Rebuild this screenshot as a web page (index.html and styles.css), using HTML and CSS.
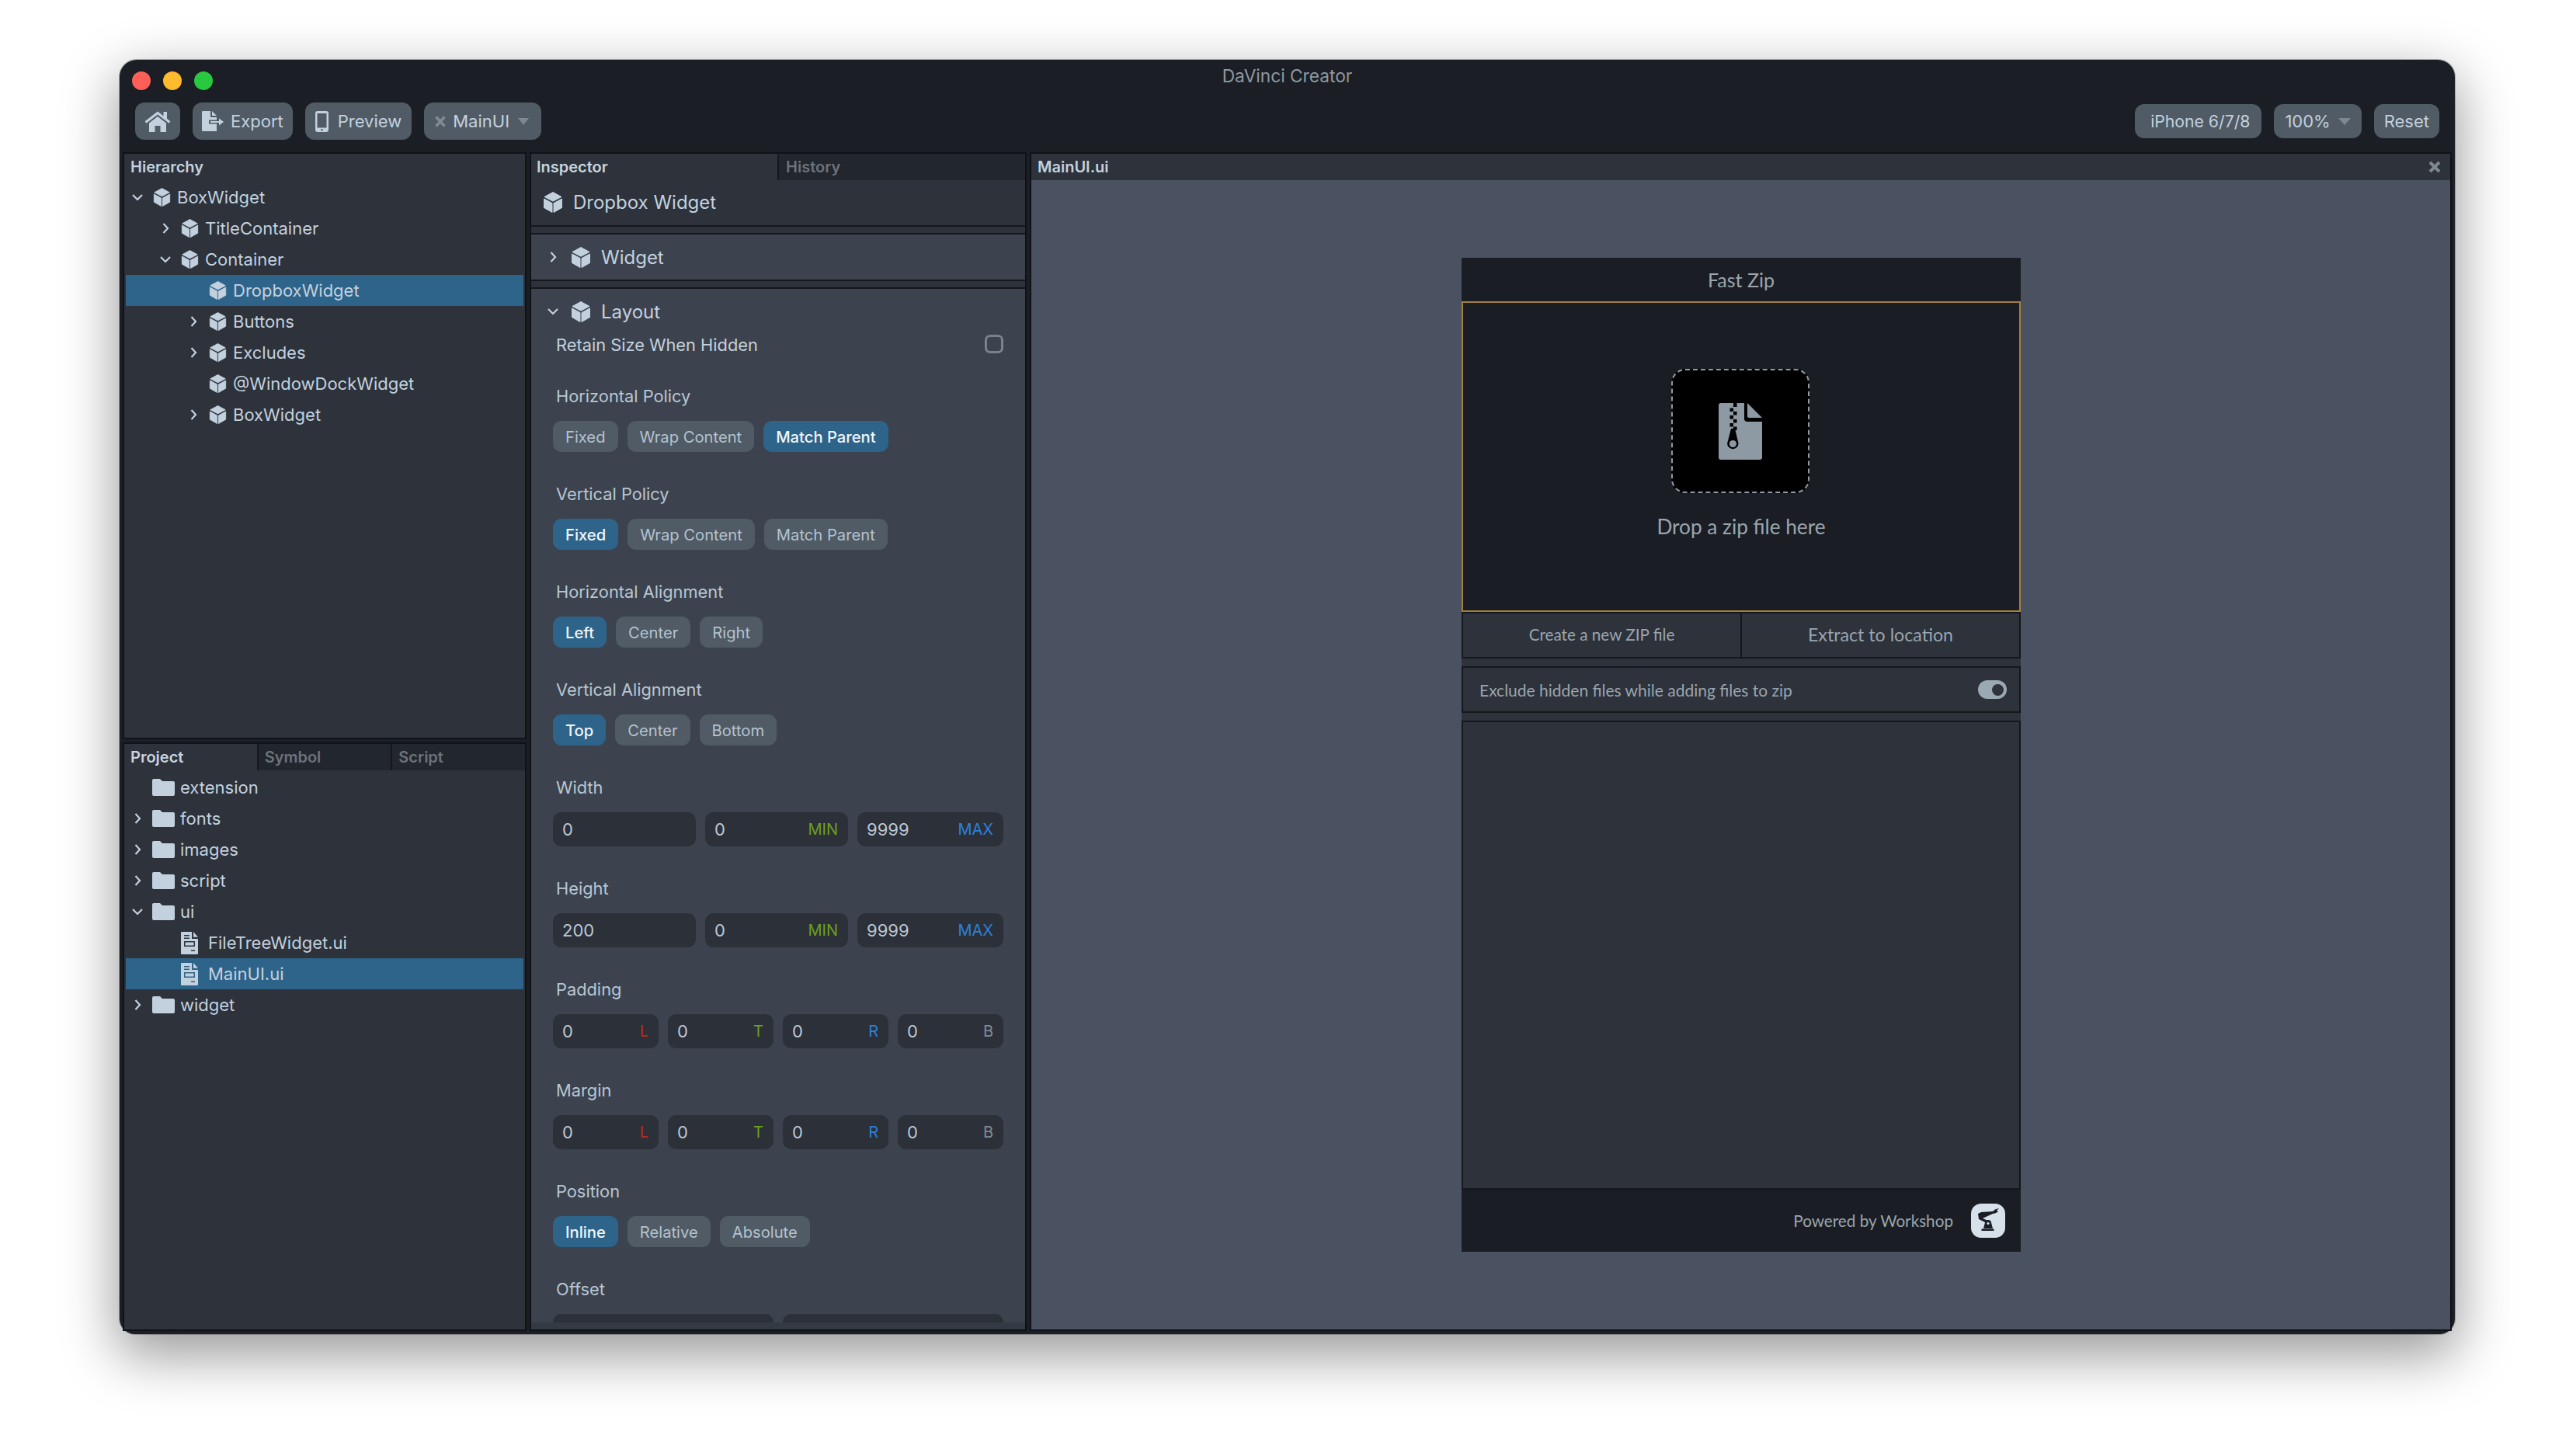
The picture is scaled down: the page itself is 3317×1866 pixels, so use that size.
FILE: index.html
```html
<!DOCTYPE html>
<html lang="en">
  <head>
    <meta charset="utf-8" />
    <title>DaVinci Creator</title>
    <link rel="stylesheet" href="styles.css">
  </head>
  <body>
    <svg class="defs" width="0" height="0">
      <symbol id="cube" viewBox="0 0 26 29">
        <path d="M13 1.5L24 7.5L13 13.2L2 7.5Z M1.5 10L12 15.6V27.5L1.5 21.5Z M24.5 10L14 15.6V27.5L24.5 21.5Z" fill="currentColor" stroke="currentColor" stroke-linejoin="round" />
      </symbol>
      <symbol id="right" viewBox="0 0 14 14">
        <path d="M4.5 1L10 7L4.5 13" fill="none" stroke="currentColor" stroke-width="2.2" />
      </symbol>
      <symbol id="down" viewBox="0 0 14 14">
        <path d="M1 4L7 10L13 4" fill="none" stroke="currentColor" stroke-width="2.2" />
      </symbol>
      <symbol id="folder" viewBox="0 0 29 22">
        <path d="M2 0H10L13 3H27a2 2 0 0 1 2 2V20a2 2 0 0 1-2 2H2a2 2 0 0 1-2-2V2a2 2 0 0 1 2-2Z" fill="currentColor" />
      </symbol>
      <symbol id="uifile" viewBox="0 0 22 29">
        <path fill="currentColor" fill-rule="evenodd" d="M1 0H14V9H22V28a1 1 0 0 1-1 1H1a1 1 0 0 1-1-1V1a1 1 0 0 1 1-1Z M4 4h7v1.5H4Z M4 7.5h7V9H4Z M4 12h14v7H4Z M5.5 13.5v4h11v-4Z M13 23.5h5V25h-5Z" />
        <path fill="currentColor" d="M16 0L22 6.8H16Z" />
      </symbol>
    </svg>

    <div class="window">
      <div class="titlebar">
        <div class="lights">
          <span class="light light-close"></span>
          <span class="light light-min"></span>
          <span class="light light-max"></span>
        </div>
        <div class="app-title">DaVinci Creator</div>
      </div>

      <div class="toolbar">
        <button class="tool home">
          <svg width="34" height="27" viewBox="0 0 34 27">
            <path d="M1.5 14.5L17 2.5L32.5 14.5" fill="none" stroke="currentColor" stroke-width="3" />
            <path d="M24.5 1H29V10H24.5Z M6 15.5L17 7L28 15.5V27H20.5V19H13.5V27H6Z" fill="currentColor" />
          </svg>
        </button>
        <button class="tool export">
          <svg width="28" height="26" viewBox="0 0 28 26">
            <path d="M1 0H11V8H19V11.5H9V16.5H19V26H1a1 1 0 0 1-1-1V1a1 1 0 0 1 1-1Z M13 0L19 6H13Z M11 13H22V9.5L28 14L22 18.5V15H11Z" fill="currentColor" />
          </svg>
          Export
        </button>
        <button class="tool preview">
          <svg width="17" height="27" viewBox="0 0 17 27">
            <path fill="currentColor" fill-rule="evenodd" d="M3 0H14a3 3 0 0 1 3 3V24a3 3 0 0 1-3 3H3a3 3 0 0 1-3-3V3a3 3 0 0 1 3-3Z M2.5 3V21.5H14.5V3Z M7.2 24.2a1.3 1.3 0 1 0 2.6 0a1.3 1.3 0 1 0-2.6 0Z" />
          </svg>
          Preview
        </button>
        <button class="tool doc-tool">
          <svg width="14" height="15" viewBox="0 0 14 15">
            <path d="M1.5 1.5L12.5 13.5M12.5 1.5L1.5 13.5" stroke="#7e8a94" stroke-width="3.6" />
          </svg>
          MainUI
          <span class="caret"></span>
        </button>

        <div class="tool-right">
          <button class="tool small device">iPhone 6/7/8</button>
          <button class="tool small zoom-tool">100% <span class="caret"></span></button>
          <button class="tool small reset">Reset</button>
        </div>
      </div>

      <div class="workspace">
        <div class="left-col">
          <div class="panel hierarchy">
            <div class="panel-head">Hierarchy</div>
            <div class="row"><svg class="chev"><use href="#down" /></svg><svg class="cube"><use href="#cube" /></svg>BoxWidget</div>
            <div class="row d1"><svg class="chev"><use href="#right" /></svg><svg class="cube"><use href="#cube" /></svg>TitleContainer</div>
            <div class="row d1"><svg class="chev"><use href="#down" /></svg><svg class="cube"><use href="#cube" /></svg>Container</div>
            <div class="row d2 selected"><span class="chev"></span><svg class="cube"><use href="#cube" /></svg>DropboxWidget</div>
            <div class="row d2"><svg class="chev"><use href="#right" /></svg><svg class="cube"><use href="#cube" /></svg>Buttons</div>
            <div class="row d2"><svg class="chev"><use href="#right" /></svg><svg class="cube"><use href="#cube" /></svg>Excludes</div>
            <div class="row d2"><span class="chev"></span><svg class="cube"><use href="#cube" /></svg>@WindowDockWidget</div>
            <div class="row d2"><svg class="chev"><use href="#right" /></svg><svg class="cube"><use href="#cube" /></svg>BoxWidget</div>
          </div>

          <div class="panel project">
            <div class="tabs">
              <div class="tab active">Project</div>
              <div class="tab">Symbol</div>
              <div class="tab">Script</div>
            </div>
            <div class="tree">
              <div class="row"><span class="chev"></span><svg class="folder"><use href="#folder" /></svg>extension</div>
              <div class="row"><svg class="chev"><use href="#right" /></svg><svg class="folder"><use href="#folder" /></svg>fonts</div>
              <div class="row"><svg class="chev"><use href="#right" /></svg><svg class="folder"><use href="#folder" /></svg>images</div>
              <div class="row"><svg class="chev"><use href="#right" /></svg><svg class="folder"><use href="#folder" /></svg>script</div>
              <div class="row"><svg class="chev"><use href="#down" /></svg><svg class="folder"><use href="#folder" /></svg>ui</div>
              <div class="row file"><span class="chev"></span><svg class="uifile"><use href="#uifile" /></svg>FileTreeWidget.ui</div>
              <div class="row file selected"><span class="chev"></span><svg class="uifile"><use href="#uifile" /></svg>MainUI.ui</div>
              <div class="row"><svg class="chev"><use href="#right" /></svg><svg class="folder"><use href="#folder" /></svg>widget</div>
            </div>
          </div>
        </div>

        <div class="panel inspector">
          <div class="tabs">
            <div class="tab active">Inspector</div>
            <div class="tab">History</div>
          </div>
          <div class="widget-title"><svg class="cube-big"><use href="#cube" /></svg>Dropbox Widget</div>
          <div class="section section-closed">
            <svg class="chev"><use href="#right" /></svg><svg class="cube-big"><use href="#cube" /></svg>Widget
          </div>
          <div class="section section-open">
            <div class="section-head">
              <svg class="chev"><use href="#down" /></svg><svg class="cube-big"><use href="#cube" /></svg>Layout
            </div>
            <div class="retain">
              <span>Retain Size When Hidden</span>
              <span class="checkbox"></span>
            </div>

            <div class="field">
              <div class="label">Horizontal Policy</div>
              <div class="btns"><span class="btn">Fixed</span><span class="btn">Wrap Content</span><span class="btn on">Match Parent</span></div>
            </div>
            <div class="field">
              <div class="label">Vertical Policy</div>
              <div class="btns"><span class="btn on">Fixed</span><span class="btn">Wrap Content</span><span class="btn">Match Parent</span></div>
            </div>
            <div class="field">
              <div class="label">Horizontal Alignment</div>
              <div class="btns"><span class="btn on">Left</span><span class="btn">Center</span><span class="btn">Right</span></div>
            </div>
            <div class="field">
              <div class="label">Vertical Alignment</div>
              <div class="btns"><span class="btn on">Top</span><span class="btn">Center</span><span class="btn">Bottom</span></div>
            </div>
            <div class="field">
              <div class="label">Width</div>
              <div class="inputs three">
                <div class="input">0</div>
                <div class="input">0<b class="tag-green">MIN</b></div>
                <div class="input">9999<b class="tag-blue">MAX</b></div>
              </div>
            </div>
            <div class="field">
              <div class="label">Height</div>
              <div class="inputs three">
                <div class="input">200</div>
                <div class="input">0<b class="tag-green">MIN</b></div>
                <div class="input">9999<b class="tag-blue">MAX</b></div>
              </div>
            </div>
            <div class="field">
              <div class="label">Padding</div>
              <div class="inputs four">
                <div class="input">0<b class="tag-red">L</b></div>
                <div class="input">0<b class="tag-green">T</b></div>
                <div class="input">0<b class="tag-blue">R</b></div>
                <div class="input">0<b class="tag-grey">B</b></div>
              </div>
            </div>
            <div class="field">
              <div class="label">Margin</div>
              <div class="inputs four">
                <div class="input">0<b class="tag-red">L</b></div>
                <div class="input">0<b class="tag-green">T</b></div>
                <div class="input">0<b class="tag-blue">R</b></div>
                <div class="input">0<b class="tag-grey">B</b></div>
              </div>
            </div>
            <div class="field">
              <div class="label">Position</div>
              <div class="btns"><span class="btn on">Inline</span><span class="btn">Relative</span><span class="btn">Absolute</span></div>
            </div>
            <div class="field">
              <div class="label">Offset</div>
              <div class="inputs two">
                <div class="input"></div>
                <div class="input"></div>
              </div>
            </div>
          </div>
          <div class="inspector-foot"></div>
        </div>

        <div class="panel canvas">
          <div class="canvas-tab">
            <span>MainUI.ui</span>
            <svg width="16" height="16" viewBox="0 0 16 16">
              <path d="M2 2L14 14M14 2L2 14" stroke="#7f8790" stroke-width="4" />
            </svg>
          </div>
          <div class="stage">
            <div class="zipapp">
              <div class="zip-title">Fast Zip</div>
              <div class="dropzone">
                <div class="dropbox">
                  <svg width="56" height="73" viewBox="0 0 56 73">
                    <path d="M3 0H33V20a4 4 0 0 0 4 4H56V70a3 3 0 0 1-3 3H3a3 3 0 0 1-3-3V3a3 3 0 0 1 3-3Z M37 0L56 19H39a2 2 0 0 1-2-2Z" fill="#8d99a3" />
                    <path d="M19 0h4.5v5H19Z M14.5 6.5h4.5v4.5H14.5Z M19 11h4.5v4.5H19Z M14.5 16h4.5v4.5H14.5Z M19 21h4.5v4.5H19Z M14.5 26h4.5v4.5H14.5Z M19 30.5h4.5v4.5H19Z M16 33H21L25.5 52a7.2 7.2 0 1 1-14.4 0Z" fill="#000" />
                    <circle cx="18.4" cy="52.5" r="4.6" fill="#8d99a3" />
                  </svg>
                </div>
                <div class="drop-text">Drop a zip file here</div>
              </div>
              <div class="zip-actions">
                <div class="zip-action create">Create a new ZIP file</div>
                <div class="zip-action">Extract to location</div>
              </div>
              <div class="zip-option">
                <span>Exclude hidden files while adding files to zip</span>
                <span class="toggle"><span class="knob"></span></span>
              </div>
              <div class="zip-log"></div>
              <div class="zip-foot">
                <span>Powered by Workshop</span>
                <span class="workshop">
                  <svg width="44" height="44" viewBox="0 0 44 44">
                    <path d="M13.5 32.5H29.5V35H13.5Z M16 32L18.5 22.5A5 5 0 0 1 25.5 22.5L28 32Z M9 13L13 11L28 10L31 7.5L36 6L33 9L35 10.5L31 12.5L28 13L15 19L22 22L20 25L10 20Z" fill="#1a1e24" />
                    <circle cx="22" cy="25.5" r="1.6" fill="#d7e1ea" />
                  </svg>
                </span>
              </div>
            </div>
          </div>
        </div>
      </div>
    </div>
  </body>
</html>
```

FILE: styles.css
```css
html,
body {
  margin: 0;
  padding: 0;
  height: 100%;
}

body {
  background-color: #fff;
  color: #c3d1df;
  font-family: "Inter", "Liberation Sans", sans-serif;
  font-size: 22px;
  overflow: hidden;
}

.defs {
  display: block;
  height: 0;
}

.window {
  box-sizing: border-box;
  display: flex;
  flex-direction: column;
  width: 3007px;
  height: 1641px;
  margin: 77px 0 0 154px;
  background-color: #1b1f25;
  border-radius: 22px 22px 20px 20px;
  box-shadow: 0 0 0 1px rgba(0, 0, 0, 0.25), 0 24px 70px 4px rgba(0, 0, 0, 0.4);
}

.titlebar {
  display: grid;
  grid-template-columns: 1fr auto 1fr;
  height: 55px;
}

.lights {
  display: flex;
  gap: 16px;
  padding: 15px 0 0 16px;
}

.light {
  width: 24px;
  height: 24px;
  border-radius: 50%;
}

.light-close { background-color: #fe5f57; }
.light-min { background-color: #febb2e; }
.light-max { background-color: #28c840; }

.app-title {
  color: #8f98a1;
  font-size: 22.7px;
  line-height: 42px;
}

.toolbar {
  display: flex;
  align-items: center;
  gap: 16px;
  height: 48px;
  padding: 0 20px;
  margin-bottom: 16px;
}

.tool {
  display: flex;
  align-items: center;
  height: 48px;
  gap: 9px;
  padding: 0 11px;
  border: 0;
  border-radius: 12px;
  background-color: #505b65;
  color: #c3d1df;
  font-family: inherit;
  font-size: 22px;
}

.home {
  width: 58px;
  padding: 0 12px;
}

.export {
  padding: 0 12px;
}

.preview {
  gap: 12px;
  padding: 0 13px;
}

.doc-tool {
  gap: 9px;
  padding: 0 16px 0 14px;
}

.caret {
  width: 0;
  height: 0;
  margin-left: 2px;
  border-left: 7px solid transparent;
  border-right: 7px solid transparent;
  border-top: 9px solid #7e8890;
}

.tool-right {
  display: flex;
  gap: 16px;
  margin-left: auto;
}

.small {
  height: 44px;
}

.device {
  padding: 0 15px 0 20px;
  font-size: 21.2px;
}

.zoom-tool {
  gap: 10px;
  padding: 0 14px;
}

.zoom-tool .caret {
  border-left-width: 8px;
  border-right-width: 8px;
  margin-left: 0;
}

.reset {
  padding: 0 13px;
}

.workspace {
  display: flex;
  flex: 1;
  min-height: 0;
  gap: 4px;
  padding: 0 4px 4px;
}

.left-col {
  display: flex;
  flex-direction: column;
  gap: 4px;
  width: 520px;
}

.panel {
  box-sizing: border-box;
  border: 2px solid #0f1216;
  background-color: #2d323b;
  overflow: hidden;
}

.hierarchy {
  height: 756px;
}

.project {
  flex: 1;
}

.panel-head {
  height: 36px;
  padding-left: 8px;
  font-size: 20px;
  font-weight: 600;
  line-height: 35px;
}

.row {
  display: flex;
  align-items: center;
  height: 40px;
  margin: 0 2px;
  padding-left: 2px;
  white-space: nowrap;
}

.row.d1 { padding-left: 38px; }
.row.d2 { padding-left: 74px; }
.row.file { padding-left: 39px; }

.selected {
  background-color: #2e6489;
}

.chev {
  flex: none;
  width: 14px;
  height: 14px;
  margin: 0 12px 0 6px;
}

.hierarchy .chev {
  margin-right: 13px;
}

.cube {
  flex: none;
  width: 23px;
  height: 26px;
  margin-right: 8px;
}

.folder {
  flex: none;
  width: 29px;
  height: 22px;
  margin-right: 7px;
}

.uifile {
  flex: none;
  width: 22px;
  height: 29px;
  margin-right: 13px;
}

.tabs {
  display: flex;
  height: 34px;
  background-color: #22262d;
  font-size: 20px;
  font-weight: 600;
  line-height: 35px;
  color: #6d737b;
}

.tab {
  flex: 1;
  box-sizing: border-box;
  padding-left: 8px;
  border-left: 2px solid #14171b;
}

.tab.active {
  border-left: 0;
  background-color: #2d323b;
  color: #c8d4df;
}

.tree {
  padding-top: 2px;
}

.inspector {
  display: flex;
  flex-direction: column;
  width: 640px;
}

.inspector .tab {
  padding-left: 9px;
}

.inspector .tab.active {
  flex: none;
  width: 317px;
  padding-left: 7px;
}

.widget-title {
  display: flex;
  align-items: center;
  flex: none;
  box-sizing: border-box;
  height: 60px;
  padding: 0 0 1px 15px;
  border-bottom: 2px solid #14171b;
  font-size: 24px;
}

.cube-big {
  flex: none;
  width: 26px;
  height: 29px;
  margin-right: 13px;
}

.section {
  flex: none;
  border-top: 2px solid #14171b;
  background-color: #3c434e;
  font-size: 24px;
}

.section-closed {
  display: flex;
  align-items: center;
  box-sizing: border-box;
  height: 62px;
  margin-top: 8px;
  border-bottom: 2px solid #14171b;
}

.section .chev {
  margin: 0 16px 0 21px;
}

.section-open {
  flex: 1;
  min-height: 0;
  margin-top: 8px;
  overflow: hidden;
}

.section-head {
  display: flex;
  align-items: center;
  height: 58px;
  margin-bottom: 2px;
}

.retain {
  display: flex;
  align-items: center;
  justify-content: space-between;
  height: 24px;
  padding: 0 28px 0 32px;
  font-size: 21.8px;
}

.checkbox {
  box-sizing: border-box;
  width: 24px;
  height: 24px;
  margin-top: -2px;
  border: 3px solid #78838f;
  border-radius: 7px;
}

.field {
  padding: 38px 28px 0;
  font-size: 21.8px;
}

.label {
  height: 32px;
  padding-left: 4px;
  margin-bottom: 16px;
  line-height: 32px;
  color: #b9c6d3;
}

.btns {
  display: flex;
  gap: 12px;
}

.btn {
  padding: 0 16px;
  height: 40px;
  border-radius: 11px;
  background-color: #505b65;
  color: #b4c2d0;
  font-size: 20.2px;
  line-height: 41px;
}

.btn.on {
  background-color: #2e6489;
  color: #f1f6fa;
  font-weight: 500;
}

.inputs {
  display: grid;
  gap: 12px;
}

.three { grid-template-columns: 184px 184px 188px; }
.four { grid-template-columns: repeat(4, 136px); }
.two { grid-template-columns: repeat(2, 284px); gap: 12px; }

.input {
  display: flex;
  align-items: center;
  justify-content: space-between;
  box-sizing: border-box;
  height: 44px;
  padding: 0 13px 0 12px;
  border-radius: 11px;
  background-color: #2c3039;
  color: #bcc8d4;
  font-size: 22px;
}

.input b {
  font-size: 20px;
  font-weight: 400;
}

.tag-green { color: #6aa01e; }
.tag-blue { color: #2f80d8; }
.tag-red { color: #c0281a; }
.tag-grey { color: #868b90; }

.inspector-foot {
  flex: none;
  height: 9px;
  background-color: #343a44;
}

.canvas {
  display: flex;
  flex: 1;
  flex-direction: column;
}

.canvas-tab {
  display: flex;
  align-items: center;
  justify-content: space-between;
  flex: none;
  height: 34px;
  padding: 0 12px 0 8px;
  font-size: 20px;
  font-weight: 600;
}

.stage {
  flex: 1;
  padding-top: 100px;
  background-color: #4a5160;
}

.zipapp {
  display: flex;
  flex-direction: column;
  width: 720px;
  height: 1280px;
  margin-left: 554px;
  background-color: #2d323b;
  font-family: "Lato", "Liberation Sans", sans-serif;
  color: #9aa5ae;
}

.zip-title {
  flex: none;
  height: 56px;
  background-color: #1a1e24;
  font-size: 25px;
  line-height: 56px;
  text-align: center;
}

.dropzone {
  display: flex;
  flex: none;
  flex-direction: column;
  align-items: center;
  box-sizing: border-box;
  height: 400px;
  padding-top: 85px;
  border: 2px solid #a57f3c;
  background-color: #1a1e24;
}

.dropbox {
  display: flex;
  align-items: center;
  justify-content: center;
  box-sizing: border-box;
  width: 178px;
  height: 160px;
  margin-right: 3px;
  border: 2px dashed #8d99a3;
  border-radius: 18px;
  background-color: #000;
}

.drop-text {
  margin-top: 25px;
  font-size: 26.2px;
  line-height: 36px;
}

.zip-actions {
  display: flex;
  flex: none;
  box-sizing: border-box;
  height: 60px;
  border: 2px solid #14171b;
  font-size: 23.2px;
  line-height: 55px;
  text-align: center;
}

.zip-action {
  flex: 1;
}

.zip-action.create {
  font-size: 20.7px;
}

.zip-action + .zip-action {
  border-left: 2px solid #14171b;
}

.zip-option {
  display: flex;
  flex: none;
  align-items: center;
  justify-content: space-between;
  box-sizing: border-box;
  height: 60px;
  margin-top: 10px;
  padding: 0 16px 0 21px;
  border: 2px solid #14171b;
  font-size: 21px;
}

.toggle {
  display: flex;
  align-items: center;
  justify-content: flex-end;
  box-sizing: border-box;
  width: 37px;
  height: 24px;
  padding-right: 4px;
  border-radius: 12px;
  background-color: #9ba9b3;
}

.knob {
  width: 15px;
  height: 15px;
  border-radius: 50%;
  background-color: #2d323b;
}

.zip-log {
  flex: 1;
  margin-top: 10px;
  border: 2px solid #14171b;
}

.zip-foot {
  display: flex;
  flex: none;
  align-items: center;
  justify-content: flex-end;
  gap: 23px;
  height: 80px;
  padding-right: 20px;
  background-color: #1a1e24;
  font-size: 20.7px;
}

.workshop {
  display: block;
  width: 44px;
  height: 44px;
  border-radius: 13px;
  background-color: #d7e1ea;
}
```
